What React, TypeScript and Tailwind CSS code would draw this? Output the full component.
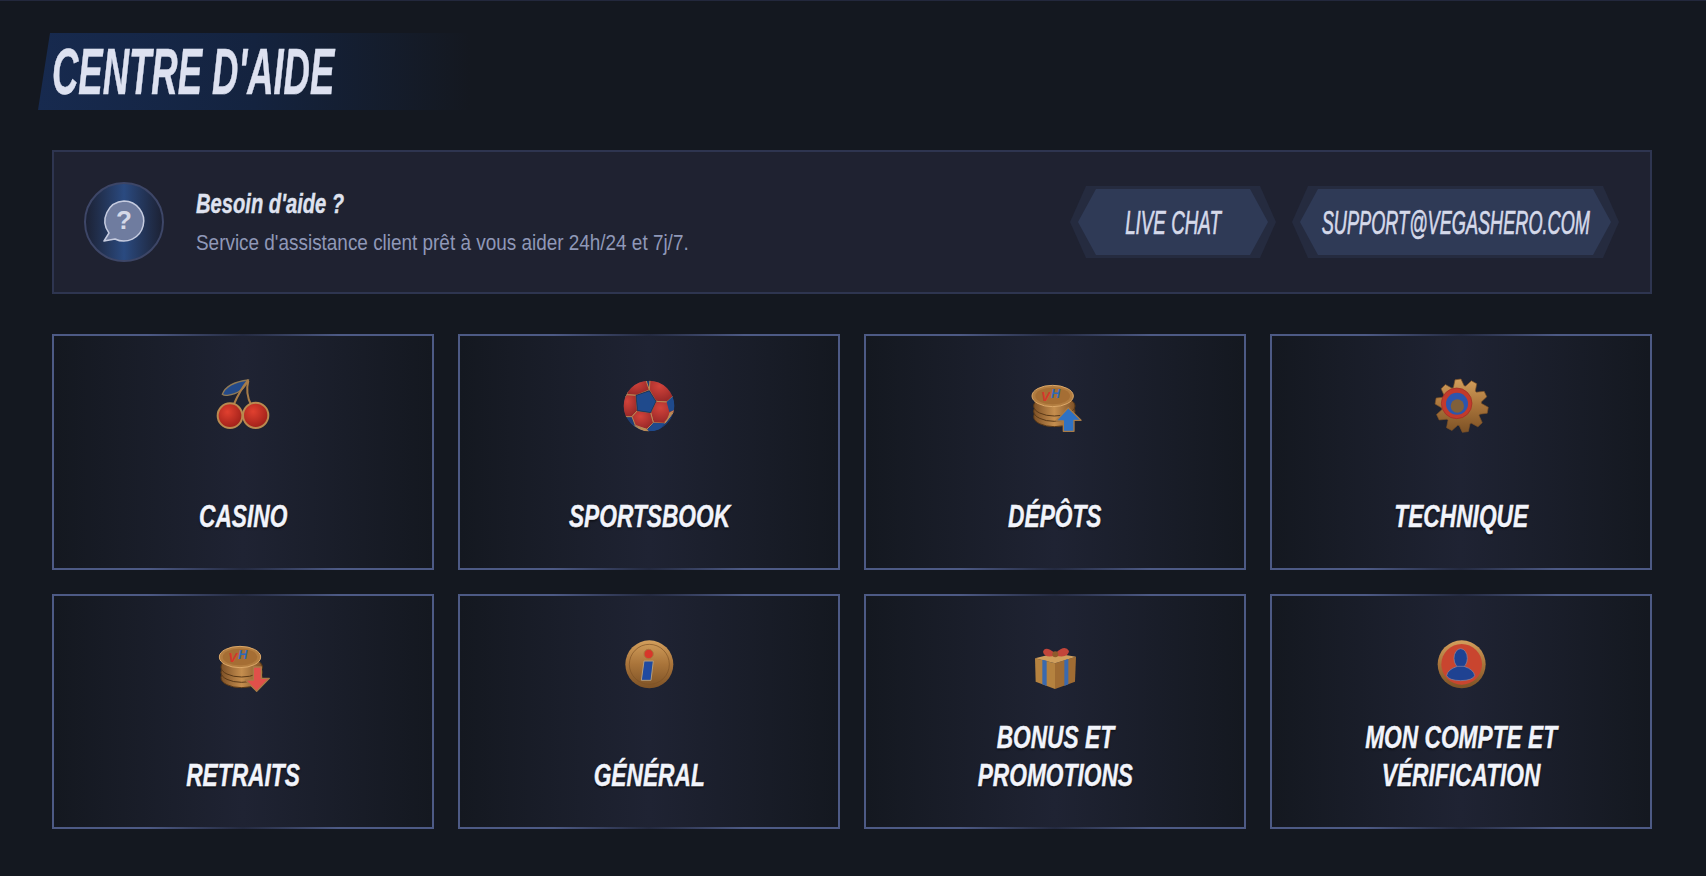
const sans = "font-['Liberation_Sans',Arial,sans-serif]";

function IconBox({ col, row, children }: { col: number; row: number; children: React.ReactNode }) {
  // drawn on a 300x240 grid, 3 units to a pixel
  const vx = [9, -3, 0, 3][col];
  const vy = row === 0 ? 0 : -15;
  return (
    <svg width="100" height="80" viewBox={`${vx} ${vy} 300 240`} className="shrink-0">
      {children}
    </svg>
  );
}

function Defs() {
  return (
    <svg width="0" height="0" className="absolute">
      <defs>
        <linearGradient id="gold" x1="0" y1="0" x2="0" y2="1">
          <stop offset="0" stopColor="#d39f5c" />
          <stop offset="0.5" stopColor="#a9743a" />
          <stop offset="1" stopColor="#7d5226" />
        </linearGradient>
        <linearGradient id="goldSide" x1="0" y1="0" x2="1" y2="0">
          <stop offset="0" stopColor="#7d5026" />
          <stop offset="0.5" stopColor="#c58e4e" />
          <stop offset="1" stopColor="#7d5026" />
        </linearGradient>
        <radialGradient id="cherry" cx="0.4" cy="0.35" r="0.7">
          <stop offset="0" stopColor="#e0402f" />
          <stop offset="1" stopColor="#9c1e18" />
        </radialGradient>
        <radialGradient id="ballRed" cx="0.4" cy="0.3" r="0.8">
          <stop offset="0" stopColor="#d2433a" />
          <stop offset="1" stopColor="#8f2425" />
        </radialGradient>
        <clipPath id="ballClip">
          <circle cx="147" cy="138" r="76" />
        </clipPath>
      </defs>
    </svg>
  );
}

function Cherry() {
  return (
    <g>
      <path d="M97 103 Q110 68 175 60 Q160 100 112 106 Q102 107 97 103Z" fill="#234a8a" stroke="#8f7a58" strokeWidth="4" />
      <path d="M175 60 Q150 90 132 132 M175 62 Q165 100 184 136" fill="none" stroke="#a87c48" strokeWidth="6" />
      <circle cx="120" cy="167" r="37" fill="url(#cherry)" stroke="#b98a50" strokeWidth="6" />
      <circle cx="197" cy="166" r="38" fill="url(#cherry)" stroke="#b98a50" strokeWidth="6" />
    </g>
  );
}

function Ball() {
  const patches = [
    "80,104 92,62 135,52 148,90 108,106",
    "148,90 150,58 200,62 226,102 200,126 168,124",
    "62,130 80,104 108,106 112,152 96,170 70,170",
    "168,124 200,126 226,150 194,190 160,188 152,158",
    "96,170 112,152 152,158 160,188 140,208 106,196",
  ];
  return (
    <g clipPath="url(#ballClip)">
      <circle cx="147" cy="138" r="76" fill="#1f3e74" />
      {patches.map((p) => (
        <polygon key={p} points={p} fill="url(#ballRed)" stroke="#b98a55" strokeWidth="3" strokeLinejoin="round" />
      ))}
      <polygon points="108,106 148,92 168,124 152,158 112,152" fill="#1f4a8c" stroke="#14233f" strokeWidth="2" />
      <polygon points="200,126 226,102 224,150 208,156" fill="#1f4a8c" />
      <polygon points="160,188 194,190 176,214 140,214" fill="#1f4a8c" />
      <path d="M196 190 Q212 172 222 150 L208 158 Q205 175 193 186Z" fill="#b98a55" />
      <path d="M100 196 Q125 216 150 218 L140 206Z" fill="#b98a55" />
    </g>
  );
}

function Coins({ dx = 0, dy = 0 }: { dx?: number; dy?: number }) {
  return (
    <g transform={`translate(${dx} ${dy})`}>
      {[62, 46, 30].map((o) => (
        <ellipse key={o} cx="148" cy={108 + o} rx="62" ry="30" fill="url(#goldSide)" stroke="#5a3917" strokeWidth="3" />
      ))}
      <ellipse cx="143" cy="108" rx="62" ry="32" fill="#b37d40" stroke="#dca869" strokeWidth="3" />
      <ellipse cx="143" cy="108" rx="52" ry="25" fill="#a56e34" />
      <text x="108" y="122" fontSize="40" fontWeight="700" fontStyle="italic" fill="#d5372b" fontFamily="'Liberation Sans',sans-serif">V</text>
      <text x="138" y="114" fontSize="38" fontWeight="700" fontStyle="italic" fill="#2f68b5" fontFamily="'Liberation Sans',sans-serif">H</text>
    </g>
  );
}

function gearPath(cx: number, cy: number, teeth: number, outer: number, inner: number) {
  const pts: string[] = [];
  for (let i = 0; i < teeth; i++) {
    const a = (i / teeth) * Math.PI * 2 + 0.2;
    const step = (Math.PI * 2) / teeth;
    const r = [
      [inner, -0.5],
      [outer, -0.22],
      [outer, 0.14],
      [inner, 0.38],
    ];
    r.forEach(([rad, off]) => {
      const t = a + off * step;
      pts.push(`${(cx + Math.cos(t) * rad).toFixed(1)},${(cy + Math.sin(t) * rad).toFixed(1)}`);
    });
  }
  return pts.join(" ");
}

function Gear() {
  return (
    <g>
      <polygon points={gearPath(155, 137, 10, 80, 60)} fill="url(#gold)" stroke="#7d5226" strokeWidth="2" strokeLinejoin="round" />
      <circle cx="140" cy="130" r="46" fill="#c23a2c" stroke="#9c2c22" strokeWidth="2" />
      <circle cx="141" cy="131" r="33" fill="#2c56ad" />
      <circle cx="142" cy="138" r="20" fill="#80603a" />
    </g>
  );
}

function Info() {
  return (
    <g>
      <circle cx="148" cy="118" r="72" fill="url(#gold)" />
      <circle cx="148" cy="118" r="60" fill="none" stroke="#7d5226" strokeWidth="2" />
      <circle cx="146" cy="87" r="14" fill="#d8362a" stroke="#a8763c" strokeWidth="3" />
      <polygon points="132,108 160,108 153,166 124,166" fill="#1f4aa0" stroke="#b59c78" strokeWidth="3" />
    </g>
  );
}

function Gift() {
  return (
    <g>
      <polygon points="90,100 150,115 150,192 92,170" fill="#b5823f" />
      <polygon points="150,115 213,95 210,170 150,192" fill="#a06c33" />
      <polygon points="90,100 150,85 213,95 150,115" fill="#cf9e5c" />
      <polygon points="112,104 125,107 125,183 112,178" fill="#3a69ae" />
      <polygon points="178,106 190,102 190,178 178,183" fill="#3a69ae" />
      <path d="M150 92 Q118 100 114 80 Q120 60 150 84Z" fill="#c2453a" />
      <path d="M152 92 Q190 100 192 78 Q180 58 152 84Z" fill="#c2453a" />
      <circle cx="151" cy="88" r="9" fill="#8f5a2b" />
    </g>
  );
}

function User() {
  return (
    <g>
      <circle cx="155" cy="118" r="72" fill="url(#gold)" />
      <circle cx="155" cy="118" r="61" fill="#c9452f" />
      <ellipse cx="152" cy="100" rx="20" ry="29" fill="#1f4292" stroke="#8f8aa0" strokeWidth="2" />
      <path d="M110 152 Q112 134 142 124 L162 124 Q192 134 194 152 Q188 166 152 167 Q116 166 110 152Z" fill="#1f4292" stroke="#8f8aa0" strokeWidth="2" />
    </g>
  );
}

function ArrowUp() {
  return <polygon points="190,143 228,181 207,181 207,214 175,214 175,183 153,183" fill="#2f72c4" stroke="#a87a45" strokeWidth="4" strokeLinejoin="round" />;
}

function ArrowDown() {
  return <polygon points="190,126 214,126 214,160 238,160 200,199 166,165 190,165" fill="#e0504a" stroke="#a87a45" strokeWidth="4" strokeLinejoin="round" />;
}

const cards: { title: string[]; icon: React.ReactNode }[] = [
  { title: ["CASINO"], icon: <Cherry /> },
  { title: ["SPORTSBOOK"], icon: <Ball /> },
  { title: ["DÉPÔTS"], icon: <><Coins /><ArrowUp /></> },
  { title: ["TECHNIQUE"], icon: <Gear /> },
  { title: ["RETRAITS"], icon: <><Coins dx={7} dy={-12} /><ArrowDown /></> },
  { title: ["GÉNÉRAL"], icon: <Info /> },
  { title: ["BONUS ET", "PROMOTIONS"], icon: <Gift /> },
  { title: ["MON COMPTE ET", "VÉRIFICATION"], icon: <User /> },
];

function HexButton({ label, className, textClass }: { label: string; className: string; textClass: string }) {
  return (
    <div className={`h-[72px] bg-[#252b3f] px-2 py-[3px] [clip-path:polygon(16px_0,calc(100%-16px)_0,100%_50%,calc(100%-16px)_100%,16px_100%,0_50%)] ${className}`}>
      <div className="flex h-full items-center justify-center bg-[#2f3a56] [clip-path:polygon(18px_0,calc(100%-18px)_0,100%_50%,calc(100%-18px)_100%,18px_100%,0_50%)]">
        <span className={`inline-block shrink-0 whitespace-nowrap text-[33px] italic leading-none text-[#d5d9ea] [-webkit-text-stroke:0.7px_#d5d9ea] ${textClass}`}>{label}</span>
      </div>
    </div>
  );
}

export default function App() {
  return (
    <div className={`h-screen overflow-hidden border-t border-[#23283d] bg-[#141820] pl-[52px] pr-[54px] pt-8 ${sans}`}>
      <Defs />
      {/* Title band */}
      <div className="-ml-[14px] flex h-[77px] w-[432px] items-center bg-gradient-to-r from-[#172a4f] via-[#14233f] to-[#141820] pl-[14px] [clip-path:polygon(12px_0,100%_0,100%_100%,0_100%)]">
        <h1 className="origin-left scale-x-[0.57] whitespace-nowrap text-[64px] font-bold italic leading-none text-[#dde1f0] [-webkit-text-stroke:0.5px_#dde1f0]">CENTRE D'AIDE</h1>
      </div>

      {/* Help panel */}
      <div className="mt-10 flex h-[144px] items-center border-2 border-[#2e3550] bg-[#1f2231] pl-[30px] pr-[31px]">
        <div className="flex h-20 w-20 items-center justify-center rounded-full border-2 border-[#3d4667] bg-gradient-to-r from-[#1c2235] via-[#2a4a80] to-[#1c2235]">
          <svg width="48" height="48" viewBox="0 0 48 48">
            <path d="M24 3 A20 20 0 1 1 15 41 L4 43 L9 35 A20 20 0 0 1 24 3Z" fill="#6f7c9f" stroke="#c6cce0" strokeWidth="1.5" strokeLinejoin="round" />
            <text x="24" y="31" textAnchor="middle" fontSize="26" fontWeight="700" fill="#d5d9e8" fontFamily="'Liberation Sans',sans-serif">?</text>
          </svg>
        </div>
        <div className="ml-8 flex-1">
          <div className="origin-left scale-x-[0.72] whitespace-nowrap text-[28px] font-bold italic leading-9 text-[#dfe2ef] [-webkit-text-stroke:0.4px_#dfe2ef]">Besoin d'aide ?</div>
          <div className="mt-[5px] origin-left scale-x-[0.86] whitespace-nowrap text-[22px] leading-8 text-[#8f98b8]">Service d'assistance client prêt à vous aider 24h/24 et 7j/7.</div>
        </div>
        <div className="flex items-center gap-4">
          <HexButton label="LIVE CHAT" className="w-[206px]" textClass="scale-x-[0.57]" />
          <HexButton label="SUPPORT@VEGASHERO.COM" className="w-[327px]" textClass="scale-x-[0.55]" />
        </div>
      </div>

      {/* Categories */}
      <div className="mt-10 grid grid-cols-4 gap-6">
        {cards.map((card, i) => (
          <div
            key={card.title[0]}
            className="flex h-[235.5px] flex-col items-center justify-between border-2 border-transparent pb-[33px] pt-6 [background:linear-gradient(90deg,#141820,#1f2333_50%,#141820)_padding-box,linear-gradient(90deg,#4d5a85,#4d5a85_25%,#242a40_50%,#4d5a85_75%,#4d5a85)_border-box]"
          >
            <IconBox col={i % 4} row={i < 4 ? 0 : 1}>{card.icon}</IconBox>
            <div className="scale-x-[0.71] whitespace-nowrap text-center text-[32px] font-bold italic leading-[38px] text-[#f2f4fb] [-webkit-text-stroke:0.4px_#f2f4fb] [text-shadow:0_2px_2px_rgba(0,0,0,0.5)]">
              {card.title.map((line) => (
                <div key={line}>{line}</div>
              ))}
            </div>
          </div>
        ))}
      </div>
    </div>
  );
}
